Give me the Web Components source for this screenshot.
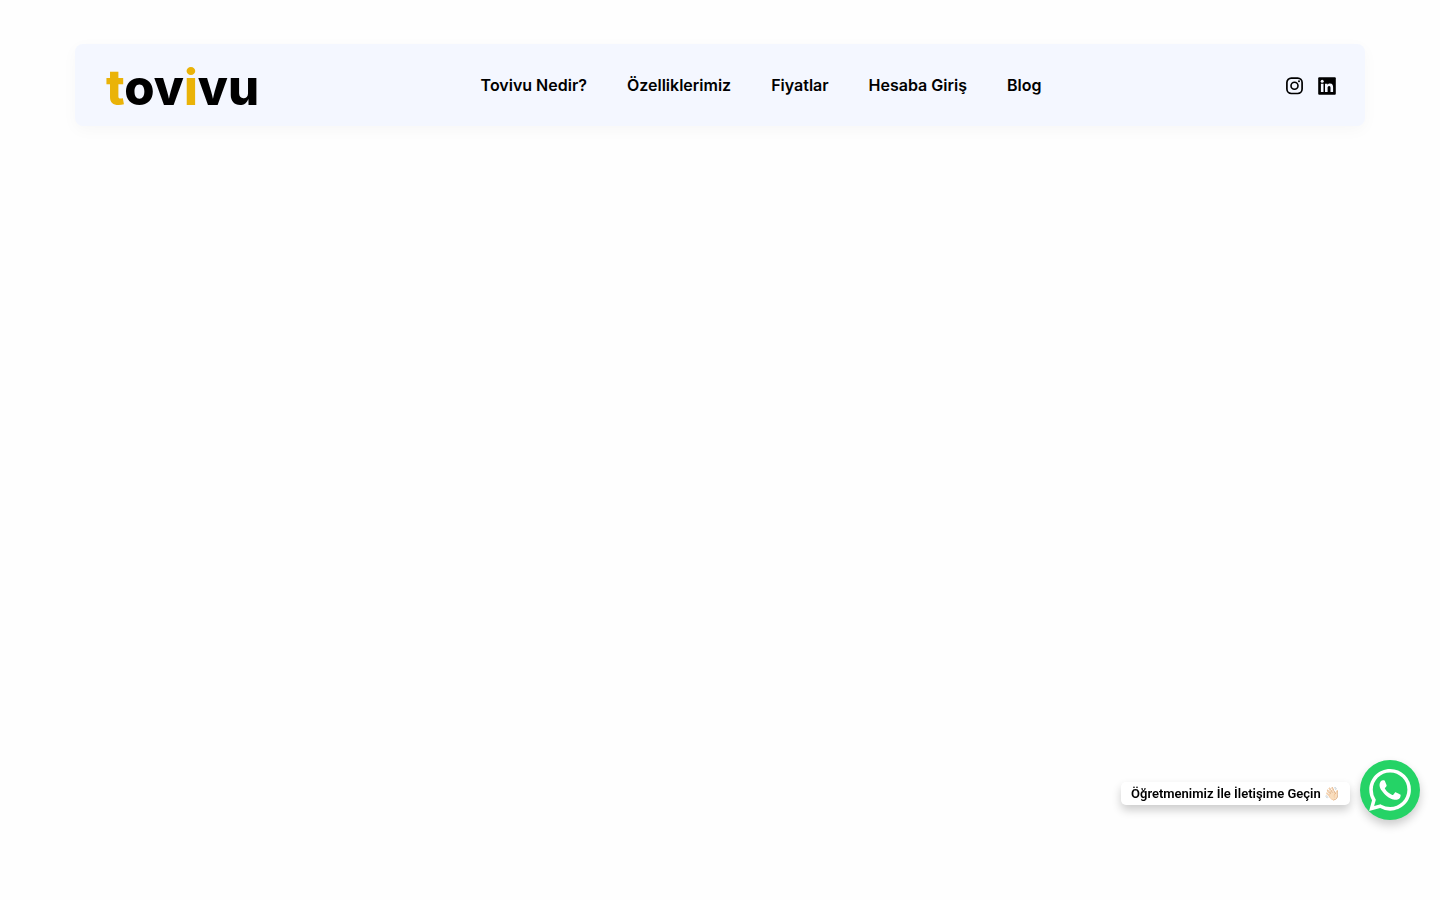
<!DOCTYPE html>
<html lang="tr">
<head>
<meta charset="utf-8">
<meta name="viewport" content="width=device-width, initial-scale=1">
<title>Tovivu</title>
<style>
  body { margin: 0; min-height: 100vh; background: #fefefe; color: #000; font-family: Inter, "Noto Sans", sans-serif; }
</style>
</head>
<body>
<site-header>
  <brand-logo slot="brand"></brand-logo>
  <nav-link href="#nedir">Tovivu Nedir?</nav-link>
  <nav-link href="#ozellikler">Özelliklerimiz</nav-link>
  <nav-link href="#fiyatlar">Fiyatlar</nav-link>
  <nav-link href="#giris">Hesaba Giriş</nav-link>
  <nav-link href="#blog">Blog</nav-link>
  <social-links slot="social"></social-links>
</site-header>
<chat-bubble>Öğretmenimiz İle İletişime Geçin 👋🏻</chat-bubble>

<script>
const define = (name, html) => customElements.define(name, class extends HTMLElement {
  constructor() {
    super();
    this.attachShadow({ mode: 'open' }).innerHTML = html;
  }
});

define('site-header', `
  <style>
    :host { display: block; padding: 44px 75px 0; }
    header { display: flex; align-items: center; justify-content: space-between; box-sizing: border-box;
      min-height: 82px; padding: 0 28px 0 31px; background: #f4f7ff; border-radius: 8px;
      box-shadow: 0 4px 16px rgba(0, 0, 0, .03); }
    nav { display: flex; gap: 40px; padding-right: 22px; }
  </style>
  <header>
    <slot name="brand"></slot>
    <nav aria-label="Ana menü"><slot></slot></nav>
    <slot name="social"></slot>
  </header>`);

define('brand-logo', `
  <style>
    :host { display: block; }
    a { display: block; padding-top: 6px; color: #000; text-decoration: none; font: 800 49px/60px Inter, sans-serif; }
    b { color: #eab308; font-weight: inherit; }
  </style>
  <a href="#"><b>t</b>ov<b>i</b>vu</a>`);

customElements.define('nav-link', class extends HTMLElement {
  constructor() {
    super();
    this.attachShadow({ mode: 'open' }).innerHTML = `
      <style>
        :host { display: block; }
        a { color: #000; text-decoration: none; font-size: 16px; line-height: 24px; font-weight: 600; white-space: nowrap; }
      </style>
      <a><slot></slot></a>`;
  }
  connectedCallback() {
    this.shadowRoot.querySelector('a').setAttribute('href', this.getAttribute('href'));
  }
});

define('social-links', `
  <style>
    :host { display: flex; gap: 12px; padding-top: 2px; }
    a { display: block; color: #000; }
    svg { display: block; width: 20px; height: 20px; }
  </style>
  <a href="#instagram" aria-label="Instagram">
    <svg viewBox="0 0 20 20" fill="none" stroke="currentColor">
      <rect x="1.9" y="2.1" width="15.2" height="15.4" rx="4.4" stroke-width="1.7"/>
      <circle cx="9.5" cy="9.8" r="3.5" stroke-width="1.6"/>
      <circle cx="14" cy="5.3" r="1" fill="currentColor" stroke="none"/>
    </svg>
  </a>
  <a href="#linkedin" aria-label="LinkedIn">
    <svg viewBox="0 0 20 20">
      <rect x="1.2" y="1.2" width="17.6" height="17.6" rx="1" fill="currentColor"/>
      <g fill="#f4f7ff"><circle cx="5.2" cy="5.3" r="1.5"/>
      <path d="M3.9 7.8h2.6v8.3H3.9zM8 7.8h2.5v1.1c.5-.8 1.4-1.3 2.5-1.3 2.6 0 3.1 1.7 3.1 4v4.5h-2.6v-4c0-1 0-2.2-1.3-2.2-1.4 0-1.6 1-1.6 2.1v4.1H8z"/></g>
    </svg>
  </a>`);

define('chat-bubble', `
  <style>
    :host { position: fixed; right: 20px; bottom: 80px; display: flex; align-items: center; gap: 10px; }
    label { margin-top: 7px; padding: 0 10px; background: #fff; border-radius: 5px; white-space: nowrap;
      font: 600 13px/23px Roboto, sans-serif; box-shadow: 0 5px 10px rgba(0, 0, 0, .2); }
    button { display: grid; place-items: center; width: 60px; height: 60px; padding: 0; border: 0;
      border-radius: 50%; background: #25d366; box-shadow: 0 5px 10px rgba(0, 0, 0, .2); cursor: pointer; }
    svg { display: block; width: 42px; height: 42px; fill: #fff; }
  </style>
  <label for="chat"><slot></slot></label>
  <button id="chat" type="button">
    <svg viewBox="0 0 24 24" aria-hidden="true"><path d="M17.472 14.382c-.297-.149-1.758-.867-2.03-.967-.273-.099-.471-.148-.67.15-.197.297-.767.966-.94 1.164-.173.199-.347.223-.644.075-.297-.15-1.255-.463-2.39-1.475-.883-.788-1.48-1.761-1.653-2.059-.173-.297-.018-.458.13-.606.134-.133.298-.347.446-.52.149-.174.198-.298.298-.497.099-.198.05-.371-.025-.52-.075-.149-.669-1.612-.916-2.207-.242-.579-.487-.5-.669-.51-.173-.008-.371-.01-.57-.01-.198 0-.52.074-.792.372-.272.297-1.04 1.016-1.04 2.479 0 1.462 1.065 2.875 1.213 3.074.149.198 2.096 3.2 5.077 4.487.709.306 1.262.489 1.694.625.712.227 1.36.195 1.871.118.571-.085 1.758-.719 2.006-1.413.248-.694.248-1.289.173-1.413-.074-.124-.272-.198-.57-.347m-5.421 7.403h-.004a9.87 9.87 0 01-5.031-1.378l-.361-.214-3.741.982.998-3.648-.235-.374a9.86 9.86 0 01-1.51-5.26c.001-5.45 4.436-9.884 9.888-9.884 2.64 0 5.122 1.03 6.988 2.898a9.825 9.825 0 012.893 6.994c-.003 5.45-4.437 9.884-9.885 9.884m8.413-18.297A11.815 11.815 0 0012.05 0C5.495 0 .16 5.335.157 11.892c0 2.096.547 4.142 1.588 5.945L.057 24l6.305-1.654a11.882 11.882 0 005.683 1.448h.005c6.554 0 11.89-5.335 11.893-11.893a11.821 11.821 0 00-3.48-8.413z"/></svg>
  </button>`);
</script>
</body>
</html>
